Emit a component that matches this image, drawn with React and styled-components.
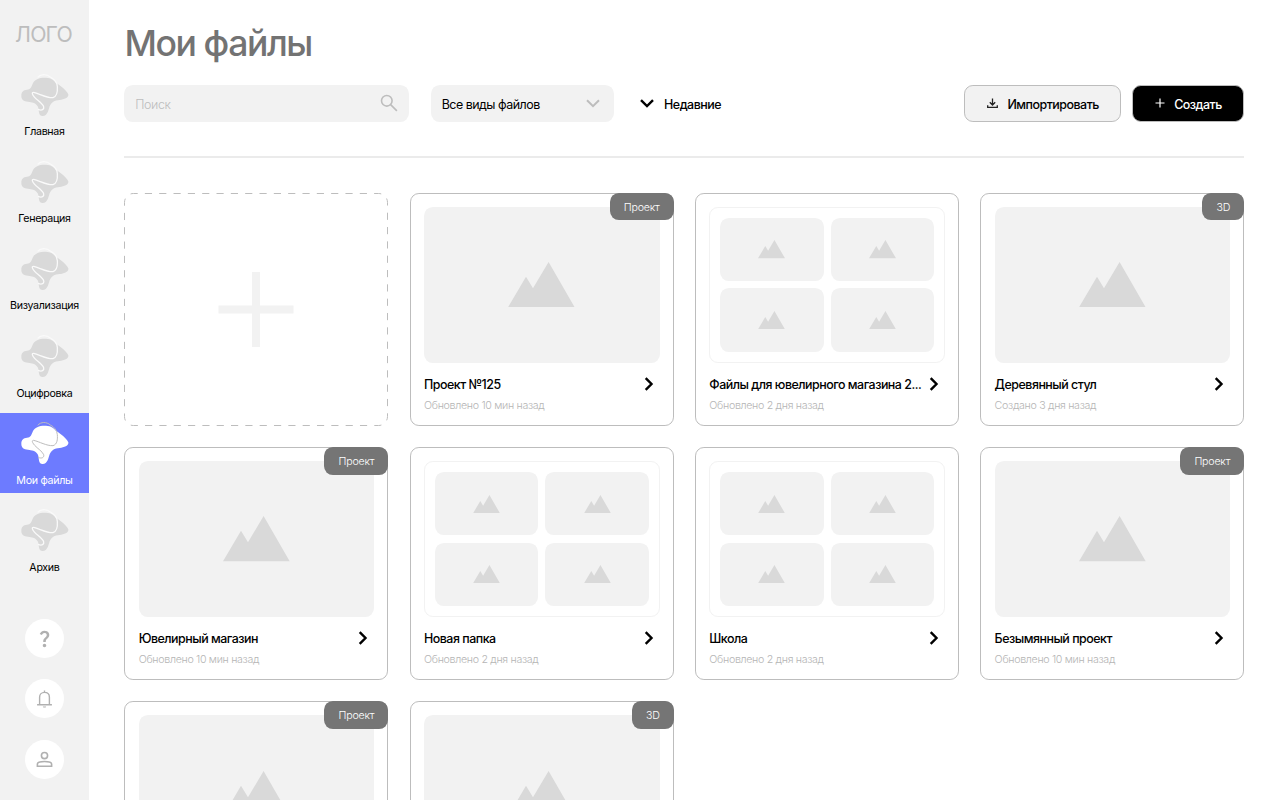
import styled, { createGlobalStyle } from "styled-components";
import { MdQuestionMark } from "react-icons/md";

const GlobalStyle = createGlobalStyle`
  * {
    box-sizing: border-box;
  }
  body {
    margin: 0;
    overflow: hidden;
    background: #fff;
    color: #000;
    font-family: Inter, "Liberation Sans", sans-serif;
  }
  button {
    font-family: inherit;
    padding: 0;
    cursor: pointer;
  }
`;

const navItems = [
  "Главная",
  "Генерация",
  "Визуализация",
  "Оцифровка",
  "Мои файлы",
  "Архив",
];

const files = [
  { name: "Проект №125", meta: "Обновлено 10 мин назад", badge: "Проект" },
  {
    name: "Файлы для ювелирного магазина 2...",
    meta: "Обновлено 2 дня назад",
    folder: true,
  },
  { name: "Деревянный стул", meta: "Создано 3 дня назад", badge: "3D" },
  { name: "Ювелирный магазин", meta: "Обновлено 10 мин назад", badge: "Проект" },
  { name: "Новая папка", meta: "Обновлено 2 дня назад", folder: true },
  { name: "Школа", meta: "Обновлено 2 дня назад", folder: true },
  { name: "Безымянный проект", meta: "Обновлено 10 мин назад", badge: "Проект" },
  { badge: "Проект" },
  { badge: "3D" },
];

const BlobIcon = ({ active }) => (
  <svg width="50" height="46" viewBox="14 18 150 138">
    <path
      d="M18 86C18 74 24 69 35 68C46 67 48 60 52 50C58 36 74 31 92 32C108 33 115 39 124 49C136 57 152 68 159 82C161 92 146 98 133 99C117 100 108 106 103 118C99 129 97 147 82 147C67 147 73 129 67 118C60 105 49 107 38 104C25 103 18 98 18 86Z"
      fill={active ? "#fff" : "#d9d9d9"}
    />
    <path
      d="M67 31C76 20 94 20 105 30C117 36 125 46 126 59C127 73 126 88 113 92C94 93 72 80 55 76C48 76 51 83 58 91C67 101 81 109 85 119C87 127 80 132 68 127"
      fill="none"
      stroke={active ? "#bdbdbd" : "#fafafa"}
      strokeWidth={active ? 3 : 3.8}
    />
  </svg>
);

const Mountains = ({ width }) => (
  <svg width={width} height={width * 0.68} viewBox="0 0 66.7 45.3">
    <path d="M0 45.3L18 14.8L25 26.3L40.6 0L66.7 45.3Z" fill="#d9d9d9" />
  </svg>
);

const ChevronDown = ({ color, strokeWidth = 2 }) => (
  <svg width="14" height="9" viewBox="0 0 14 9">
    <path
      d="M1 1.2L7 7.1L13 1.2"
      fill="none"
      stroke={color}
      strokeWidth={strokeWidth}
    />
  </svg>
);

const FileCard = ({ file }) => (
  <Card>
    {file.folder ? (
      <FolderPreview>
        {[0, 1, 2, 3].map((i) => (
          <Preview key={i}>
            <Mountains width={27} />
          </Preview>
        ))}
      </FolderPreview>
    ) : (
      <Preview $large>
        <Mountains width={66.7} />
      </Preview>
    )}
    {file.name && (
      <CardTitle>
        <CardName>{file.name}</CardName>
        <svg width="10" height="14" viewBox="0 0 10 14">
          <path
            d="M1.7 1.2L7.5 7L1.7 12.8"
            fill="none"
            stroke="#000"
            strokeWidth="2.4"
          />
        </svg>
      </CardTitle>
    )}
    {file.meta && <CardMeta>{file.meta}</CardMeta>}
    {file.badge && <Badge>{file.badge}</Badge>}
  </Card>
);

const App = () => {
  return (
    <Layout>
      <GlobalStyle />
      <Sidebar>
        <Logo>ЛОГО</Logo>
        <Nav>
          {navItems.map((item) => (
            <NavItem key={item} $active={item === "Мои файлы"}>
              <BlobIcon active={item === "Мои файлы"} />
              <span>{item}</span>
            </NavItem>
          ))}
        </Nav>
        <SideActions>
          <RoundButton aria-label="Помощь">
            <MdQuestionMark size={21} />
          </RoundButton>
          <RoundButton aria-label="Уведомления">
            <svg width="17" height="20" viewBox="0 0 16 20">
              <path
                d="M3.1 15.6V8.2C3.1 5.3 5.2 3.4 8 3.4S12.9 5.3 12.9 8.2V15.6M.6 15.7H15.4M8 3.2V1.6"
                fill="none"
                stroke="currentColor"
                strokeWidth="1.4"
              />
              <path d="M6.3 17.4H9.7Q9.4 18.6 8 18.6T6.3 17.4Z" fill="currentColor" />
            </svg>
          </RoundButton>
          <RoundButton aria-label="Профиль">
            <svg width="17" height="17" viewBox="0 0 16 16">
              <g fill="none" stroke="currentColor" strokeWidth="1.5">
                <circle cx="8" cy="4.3" r="2.9" />
                <path d="M1.3 14.3V12.4C1.3 10.9 4.6 9.9 8 9.9S14.7 10.9 14.7 12.4V14.3Z" />
              </g>
            </svg>
          </RoundButton>
        </SideActions>
      </Sidebar>

      <Main>
        <Title>Мои файлы</Title>
        <Toolbar>
          <Search>
            <span>Поиск</span>
            <svg width="18" height="18" viewBox="0 0 18 18">
              <g fill="none" stroke="#bdbdbd" strokeWidth="1.6">
                <circle cx="6.8" cy="6.8" r="5.3" />
                <path d="M10.6 10.6L16.9 16.9" />
              </g>
            </svg>
          </Search>
          <Select>
            <span>Все виды файлов</span>
            <ChevronDown color="#bdbdbd" />
          </Select>
          <Sort>
            <ChevronDown color="#000" strokeWidth={2.4} />
            <span>Недавние</span>
          </Sort>
          <Buttons>
            <Button $width="156.4px">
              <svg width="11" height="11" viewBox="0 0 11 11">
                <path
                  d="M5.5 .6V6.8M2.8 4.3L5.5 7L8.2 4.3M.7 7.2V9.4H10.3V7.2"
                  fill="none"
                  stroke="#222"
                  strokeWidth="1.3"
                />
              </svg>
              <span>Импортировать</span>
            </Button>
            <Button $width="112.9px" $dark>
              <svg width="10" height="10" viewBox="0 0 10 10">
                <path d="M5 .5V9.5M.5 5H9.5" stroke="#fff" strokeWidth="1.2" />
              </svg>
              <span>Создать</span>
            </Button>
          </Buttons>
        </Toolbar>
        <Divider />
        <Grid>
          <NewCard>
            <svg width="264" height="233" viewBox="0 0 264 233">
              <rect
                x=".5"
                y=".5"
                width="263"
                height="232"
                rx="8.9"
                fill="none"
                stroke="#bdbdbd"
                pathLength="136"
                strokeDasharray="1 1"
                strokeDashoffset=".4"
              />
              <path d="M132 79V154M94.5 116.5H169.5" stroke="#f2f2f2" strokeWidth="8" />
            </svg>
          </NewCard>
          {files.map((file, i) => (
            <FileCard key={i} file={file} />
          ))}
        </Grid>
      </Main>
    </Layout>
  );
};

const Layout = styled.div`
  display: flex;
  height: 800px;
  overflow: hidden;
`;

const Sidebar = styled.aside`
  display: flex;
  flex-direction: column;
  align-items: center;
  width: 88.9px;
  flex-shrink: 0;
  background: #f2f2f2;
`;

const Logo = styled.div`
  height: 64.9px;
  padding: 20px 2px 0 0;
  line-height: 28px;
  font-size: 21.3px;
  letter-spacing: -0.04em;
  color: #bdbdbd;
`;

const Nav = styled.nav`
  display: flex;
  flex-direction: column;
  gap: 7.1px;
  width: 100%;
`;

const NavItem = styled.a`
  display: flex;
  flex-direction: column;
  align-items: center;
  height: 80px;
  padding-top: 8px;
  background: ${(props) => (props.$active ? "#6d7bff" : "transparent")};
  color: ${(props) => (props.$active ? "#fff" : "#000")};
  font-size: 10.67px;
  line-height: 14px;
  letter-spacing: -0.03em;
  white-space: nowrap;

  svg {
    margin-left: 1px;
  }

  span {
    margin-top: 6.4px;
  }
`;

const SideActions = styled.div`
  display: flex;
  flex-direction: column;
  gap: 21.3px;
  margin-top: 38.6px;
`;

const RoundButton = styled.button`
  display: flex;
  align-items: center;
  justify-content: center;
  width: 39.1px;
  height: 39.1px;
  border: none;
  border-radius: 50%;
  background: #fff;
  color: #b0b0b0;
`;

const Main = styled.main`
  flex: 1;
  padding: 22.1px 35.6px 0;
`;

const Title = styled.h1`
  margin: 0;
  height: 63.2px;
  line-height: 44px;
  font-size: 35.56px;
  font-weight: 500;
  letter-spacing: -0.04em;
  color: #737373;
`;

const Toolbar = styled.div`
  display: flex;
  height: 36.4px;
  font-size: 12.44px;
  letter-spacing: -0.04em;

  span {
    padding-top: 2px;
  }
`;

const Field = styled.div`
  display: flex;
  align-items: center;
  justify-content: space-between;
  border-radius: 8.9px;
  background: #f2f2f2;
`;

const Search = styled(Field)`
  width: 284.9px;
  padding: 0 11.5px 0 10.7px;
  font-weight: 300;
  letter-spacing: -0.03em;
  color: #bdbdbd;
`;

const Select = styled(Field)`
  width: 183px;
  margin-left: 21.3px;
  padding: 0 13.2px 0 11px;
`;

const Sort = styled.div`
  display: flex;
  align-items: center;
  gap: 10.5px;
  margin-left: 25.9px;
  font-weight: 500;
`;

const Buttons = styled.div`
  display: flex;
  gap: 10.7px;
  margin-left: auto;
`;

const Button = styled.button`
  display: flex;
  align-items: center;
  justify-content: center;
  gap: 9px;
  width: ${(props) => props.$width};
  padding-left: 1px;
  border: 0.9px solid #bdbdbd;
  border-radius: 8.9px;
  background: ${(props) => (props.$dark ? "#000" : "#f2f2f2")};
  color: ${(props) => (props.$dark ? "#fff" : "#000")};
  font-size: 12.44px;
  font-weight: 500;
  letter-spacing: -0.04em;
`;

const Divider = styled.div`
  height: 2px;
  margin: 34.6px 0;
  background: #ebebeb;
`;

const Grid = styled.div`
  display: grid;
  grid-template-columns: repeat(4, 1fr);
  grid-auto-rows: 232.9px;
  gap: 21.3px 21.33px;
`;

const NewCard = styled.div`
  display: flex;
`;

const Card = styled.article`
  position: relative;
  min-width: 0;
  padding: 13.2px;
  border: 1px solid #bdbdbd;
  border-radius: 8.9px;
`;

const Preview = styled.div`
  display: flex;
  align-items: center;
  justify-content: center;
  height: ${(props) => (props.$large ? "155.5px" : "auto")};
  border-radius: 8.9px;
  background: #f2f2f2;
`;

const FolderPreview = styled.div`
  display: grid;
  grid-template-columns: 1fr 1fr;
  grid-template-rows: 1fr 1fr;
  gap: 7.1px;
  height: 155.5px;
  padding: 9.7px;
  border: 1px solid #f2f2f2;
  border-radius: 8.9px;
`;

const CardTitle = styled.div`
  display: flex;
  align-items: center;
  justify-content: space-between;
  height: 18px;
  margin-top: 12.5px;
  padding-right: 6px;
`;

const CardName = styled.div`
  white-space: nowrap;
  font-size: 12.44px;
  font-weight: 500;
  letter-spacing: -0.04em;
`;

const CardMeta = styled.div`
  margin-top: 6px;
  line-height: 14px;
  font-size: 10.67px;
  font-weight: 300;
  letter-spacing: -0.03em;
  color: #b5b5b5;
`;

const Badge = styled.div`
  position: absolute;
  top: -1px;
  right: -1px;
  height: 27.5px;
  padding: 0 14.2px;
  border-radius: 8.9px;
  background: #757575;
  color: #fff;
  font-size: 10.67px;
  font-weight: 300;
  line-height: 29px;
  letter-spacing: -0.02em;
`;

export default App;
